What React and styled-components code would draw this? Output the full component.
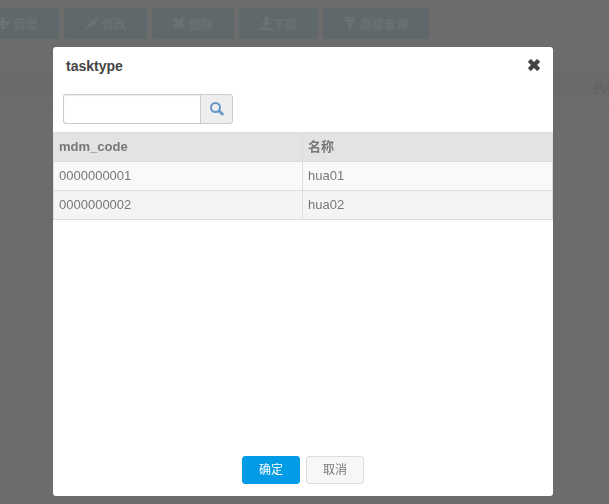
import React from 'react';
import styled, { createGlobalStyle } from 'styled-components';

const GlobalStyle = createGlobalStyle`
  * { box-sizing: border-box; }
  body {
    margin: 0;
    overflow: hidden;
    background: #6c6c6c;
    font-family: "Liberation Sans", "Noto Sans CJK SC", sans-serif;
    font-size: 13px;
    color: #777;
  }
  button, input { font: inherit; }
`;

const Page = styled.main`
  height: 504px;
  overflow: hidden;
`;

const Toolbar = styled.div`
  display: flex;
  gap: 5px;
  height: 72px;
  padding-top: 8px;
  margin-left: -24px;
`;

const ToolButton = styled.button`
  display: flex;
  flex: none;
  align-items: center;
  justify-content: center;
  gap: ${(p) => p.$gap ?? 4}px;
  width: ${(p) => p.$width}px;
  height: 31px;
  padding: 0 0 1px;
  border: 0;
  border-radius: 3px;
  background: #5f686b;
  color: #6c7173;
  font-size: 12px;
  font-weight: 700;
  svg { flex: none; }
`;

const ListHeader = styled.div`
  height: 26px;
  padding: 6px 0 0 593px;
  border-bottom: 1px solid #6e6e6e;
  background: #6a6a6a;
  color: #616161;
  line-height: 20px;
  white-space: nowrap;
`;

const ListRow = styled.div`
  height: 12px;
  border-bottom: 1px solid #6a6868;
`;

const Overlay = styled.div`
  position: fixed;
  inset: 0;
  padding: 47px 56px 8px 53px;
`;

const Dialog = styled.section`
  display: flex;
  flex-direction: column;
  height: 449px;
  border-radius: 3px;
  background: #fff;
`;

const DialogHeader = styled.header`
  display: flex;
  align-items: flex-start;
  justify-content: space-between;
  height: 47px;
  padding: 11px 13px 0;
`;

const Title = styled.h1`
  margin: 0;
  color: #444;
  font-size: 14px;
  line-height: 16px;
`;

const CloseButton = styled.button`
  display: flex;
  margin-top: 1px;
  padding: 0;
  border: 0;
  background: none;
  color: #444;
`;

const SearchGroup = styled.div`
  display: flex;
  width: 170px;
  height: 30px;
  margin: 0 0 8px 10px;
`;

const SearchInput = styled.input`
  width: 138px;
  border: 1px solid #ccc;
  border-right: 0;
  border-radius: 3px 0 0 3px;
  background: #fff;
  box-shadow: inset 0 1px 1px rgba(0, 0, 0, 0.075);
  outline: none;
`;

const SearchButton = styled.button`
  display: flex;
  width: 33px;
  margin-left: -1px;
  padding: 7px 0 0 9px;
  border: 1px solid #ccc;
  border-radius: 0 3px 3px 0;
  background: #eee;
  color: #6495ca;
`;

const Table = styled.table`
  width: 500px;
  border-collapse: collapse;
  table-layout: fixed;
`;

const Row = styled.tr`
  height: 29px;
  background: ${(p) => p.$bg};
`;

const Cell = styled.td`
  width: ${(p) => p.$width};
  padding: 0 5px 1px;
  border: 1px solid #ddd;
  line-height: 18px;
  text-align: left;
`;

const Footer = styled.footer`
  display: flex;
  justify-content: center;
  gap: 6px;
  margin-top: auto;
  padding-bottom: 12px;
`;

const ActionButton = styled.button`
  width: 58px;
  height: 28px;
  padding: 0;
  border: 1px solid ${(p) => (p.$primary ? '#039be5' : '#ddd')};
  border-radius: 3px;
  background: ${(p) => (p.$primary ? '#039be5' : '#f7f7f7')};
  color: ${(p) => (p.$primary ? '#fff' : '#777')};
  font-size: 12px;
  line-height: 24px;
`;

const PlusIcon = () => (
  <svg width="12" height="12" viewBox="0 0 12 12" fill="currentColor">
    <path d="M4.5 0h3a.5.5 0 0 1 .5.5V4h3.5a.5.5 0 0 1 .5.5v3a.5.5 0 0 1-.5.5H8v3.5a.5.5 0 0 1-.5.5h-3a.5.5 0 0 1-.5-.5V8H.5a.5.5 0 0 1-.5-.5v-3A.5.5 0 0 1 .5 4H4V.5a.5.5 0 0 1 .5-.5Z" />
  </svg>
);

const PencilIcon = () => (
  <svg width="14" height="13" viewBox="0 0 14 13" fill="currentColor">
    <path d="M10.8.3a1 1 0 0 1 1.4 0l1.4 1.4a1 1 0 0 1 0 1.4l-1 1-2.8-2.8ZM9.1 2l2.8 2.8-6.5 6.3-2.8-2.8ZM1.9 9.2l2.6 2.6L.3 13Z" />
  </svg>
);

const CrossIcon = () => (
  <svg width="12" height="12" viewBox="0 0 12 12" fill="currentColor">
    <path d="M3.2.2 6 2.9 8.8.2a.6.6 0 0 1 .8 0l2.2 2.2a.6.6 0 0 1 0 .8L9.1 6l2.7 2.8a.6.6 0 0 1 0 .8l-2.2 2.2a.6.6 0 0 1-.8 0L6 9.1l-2.8 2.7a.6.6 0 0 1-.8 0L.2 9.6a.6.6 0 0 1 0-.8L2.9 6 .2 3.2a.6.6 0 0 1 0-.8L2.4.2a.6.6 0 0 1 .8 0Z" />
  </svg>
);

const SaveIcon = () => (
  <svg width="13" height="13" viewBox="0 0 13 13" fill="currentColor">
    <path d="M4.5 0h4v5H12L6.5 10 1 5h3.5ZM0 10.3h13V13H0Z" />
  </svg>
);

const FilterIcon = () => (
  <svg width="12" height="13" viewBox="0 0 12 13" fill="currentColor">
    <path d="M0 0h12v1.6H0ZM.5 2.3h11L7.8 7.2v4L4.6 13V7.2Z" />
  </svg>
);

const SearchIcon = () => (
  <svg width="14" height="14" viewBox="0 0 14 14" fill="none" stroke="currentColor">
    <circle cx="5.5" cy="5.5" r="4.5" strokeWidth="2" />
    <path d="m9 9 3.3 3.1" strokeWidth="2.8" strokeLinecap="round" />
  </svg>
);

const tools = [
  { label: '新增', width: 83, icon: <PlusIcon /> },
  { label: '修改', width: 83, icon: <PencilIcon />, gap: 3 },
  { label: '删除', width: 82, icon: <CrossIcon /> },
  { label: '下载', width: 79, gap: 0, icon: <SaveIcon /> },
  { label: '高级查询', width: 106, icon: <FilterIcon /> },
];

const records = [
  { code: '0000000001', name: 'hua01', bg: '#f9f9f9' },
  { code: '0000000002', name: 'hua02', bg: '#f4f4f4' },
];

export default function App() {
  return (
    <>
      <GlobalStyle />
      <Page>
        <Toolbar>
          {tools.map((t) => (
            <ToolButton key={t.label} $width={t.width} $gap={t.gap}>
              {t.icon}
              {t.label}
            </ToolButton>
          ))}
        </Toolbar>
        <ListHeader>执行</ListHeader>
        <ListRow />
      </Page>
      <Overlay>
        <Dialog role="dialog" aria-label="tasktype">
          <DialogHeader>
            <Title>tasktype</Title>
            <CloseButton aria-label="close">
              <CrossIcon />
            </CloseButton>
          </DialogHeader>
          <SearchGroup>
            <SearchInput aria-label="search" />
            <SearchButton aria-label="search">
              <SearchIcon />
            </SearchButton>
          </SearchGroup>
          <Table>
            <thead>
              <Row $bg="#e4e3e1">
                <Cell as="th" $width="249px">mdm_code</Cell>
                <Cell as="th">名称</Cell>
              </Row>
            </thead>
            <tbody>
              {records.map((r) => (
                <Row key={r.code} $bg={r.bg}>
                  <Cell>{r.code}</Cell>
                  <Cell>{r.name}</Cell>
                </Row>
              ))}
            </tbody>
          </Table>
          <Footer>
            <ActionButton $primary>确定</ActionButton>
            <ActionButton>取消</ActionButton>
          </Footer>
        </Dialog>
      </Overlay>
    </>
  );
}
